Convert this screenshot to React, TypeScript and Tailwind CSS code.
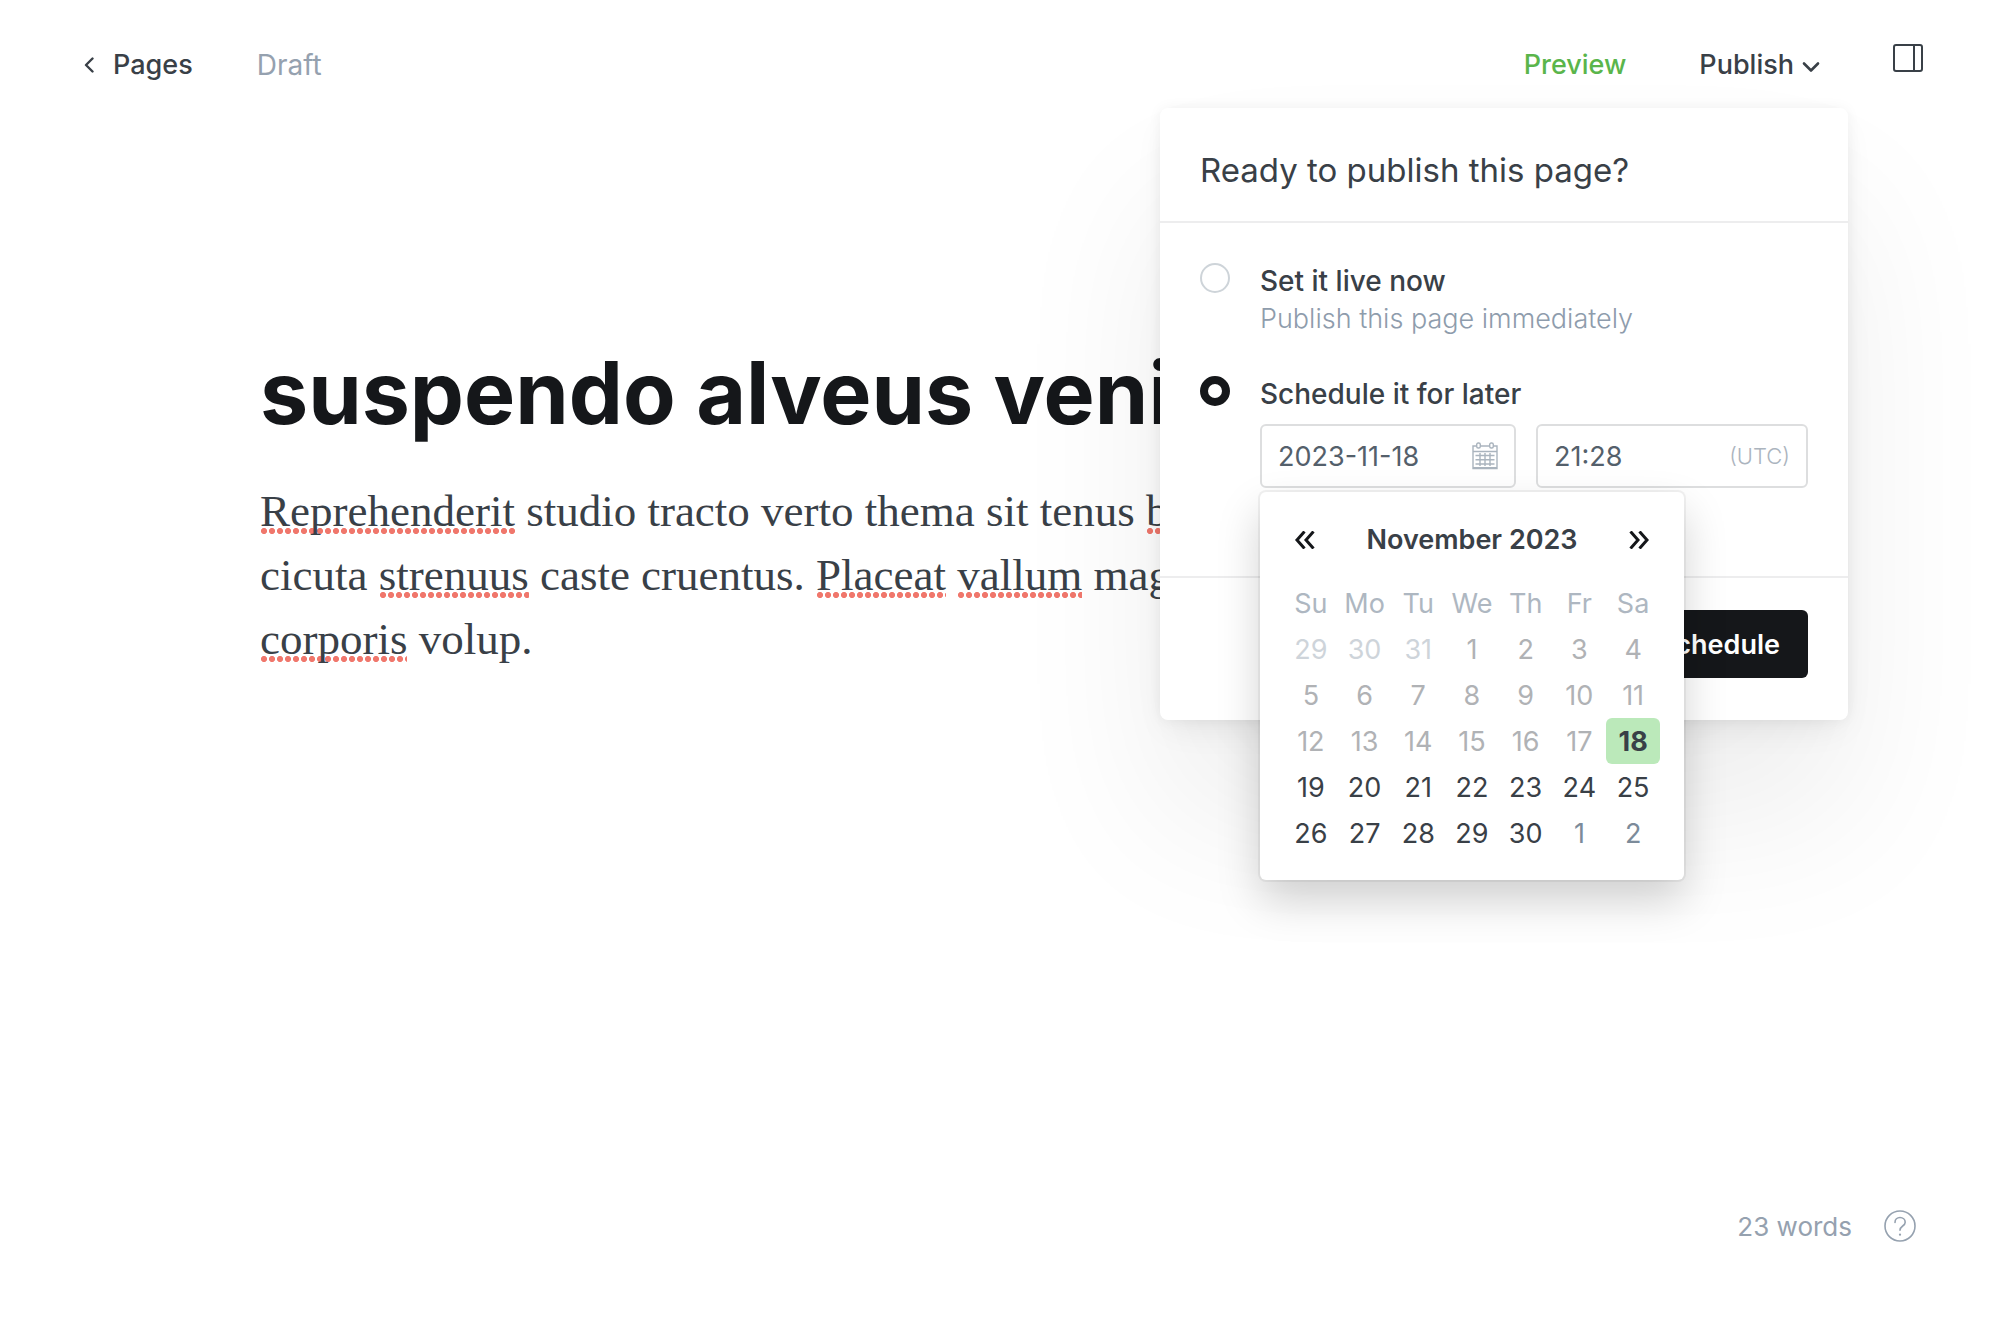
import { useState } from 'react';

const weekdays = ['Su', 'Mo', 'Tu', 'We', 'Th', 'Fr', 'Sa'];
const weeks = [
  [29, 30, 31, 1, 2, 3, 4],
  [5, 6, 7, 8, 9, 10, 11],
  [12, 13, 14, 15, 16, 17, 18],
  [19, 20, 21, 22, 23, 24, 25],
  [26, 27, 28, 29, 30, 1, 2],
];

function dayClass(week: number, day: number) {
  if (week === 0 && day > 7) return 'text-[#ced4da]';
  if (week === 4 && day < 7) return 'text-[#7c8b9a]';
  if (week === 2 && day === 18) return 'rounded-md bg-[#bbe9ba] font-bold text-[#394047]';
  if (week < 3) return 'text-[#b0b2b5]';
  return 'text-[#394047]';
}

function Misspelled({ children }: { children: string }) {
  return (
    <span className="bg-[radial-gradient(circle,#f0776c_2.7px,transparent_3.4px)] bg-[length:8px_6px] bg-[position:left_bottom_2px] bg-repeat-x">
      {children}
    </span>
  );
}

function CalendarIcon() {
  return (
    <svg width="26" height="28" viewBox="0 0 26 28" fill="none" stroke="#aab4be" strokeWidth="1.4" className="shrink-0" aria-hidden="true">
      <path d="M4.500 4H1v22.500h24V4h-3.500M8.500 4h9M1 9.500h24" />
      <path d="M1 26h24" strokeWidth="2" />
      <rect x="4.700" y="1" width="3.600" height="5" rx="1.500" />
      <rect x="17.700" y="1" width="3.600" height="5" rx="1.500" />
      <path d="M3.500 13.500h19M3.500 17.800h19M3.500 22h19M8 11v13M13 11v13M18 11v13" />
    </svg>
  );
}

function DoubleChevron({ flip }: { flip?: boolean }) {
  return (
    <svg width="22" height="18" viewBox="0 0 22 18" fill="none" stroke="#15171a" strokeWidth="3" className={flip ? 'rotate-180' : ''} aria-hidden="true">
      <path d="M10.500 0.500L3 9l7.500 8.500M19.500 0.500L12 9l7.500 8.500" />
    </svg>
  );
}

function Calendar() {
  return (
    <div className="absolute top-full left-0 mt-1 w-[424px] rounded-md bg-white p-6 shadow-[0_0_0_2px_rgba(0,0,0,0.05),0_20px_44px_rgba(0,0,0,0.18)]">
      <div className="flex h-12 items-center justify-between px-2.5">
        <button type="button" aria-label="Previous month">
          <DoubleChevron />
        </button>
        <span className="text-[27px] font-semibold text-[#394047]">November 2023</span>
        <button type="button" aria-label="Next month">
          <DoubleChevron flip />
        </button>
      </div>
      <table className="mt-4 w-full table-fixed border-collapse text-center text-[27px] leading-[44px]">
        <thead>
          <tr>
            {weekdays.map((d) => (
              <th key={d} scope="col" className="p-0 pt-0.5 font-normal text-[#aeb7c1]">
                {d}
              </th>
            ))}
          </tr>
        </thead>
        <tbody>
          {weeks.map((week, w) => (
            <tr key={w}>
              {week.map((day) => (
                <td key={day} className="p-0">
                  <button type="button" className={`block h-[46px] w-full pt-0.5 ${dayClass(w, day)}`}>
                    {day}
                  </button>
                </td>
              ))}
            </tr>
          ))}
        </tbody>
      </table>
    </div>
  );
}

const radioClass =
  'size-[30px] shrink-0 appearance-none rounded-full border-2 border-[#ced4d9] bg-white checked:border-8 checked:border-[#15171a]';

function PublishPanel() {
  const [mode, setMode] = useState('later');
  return (
    <section className="absolute top-[108px] right-[152px] z-10 w-[688px] rounded-lg bg-white shadow-[0_0_14px_rgba(0,0,0,0.05),0_14px_32px_-8px_rgba(0,0,0,0.08),0_100px_160px_rgba(0,0,0,0.07)]">
      <h2 className="border-b-2 border-[#ededee] px-10 pt-10 pb-[29px] text-[33px] leading-[44px] text-[#394047]">
        Ready to publish this page?
      </h2>
      <div className="px-10 pt-10 pb-[88px]">
        <div className="flex gap-[30px]">
          <input id="live" type="radio" name="mode" className={radioClass} checked={mode === 'live'} onChange={() => setMode('live')} />
          <label htmlFor="live" className="block">
            <span className="block text-[28px] leading-9 font-medium text-[#394047]">Set it live now</span>
            <span className="block text-[27px] leading-10 font-light text-[#8e9cac]">Publish this page immediately</span>
          </label>
        </div>
        <div className="mt-[37px] flex gap-[30px]">
          <input id="later" type="radio" name="mode" className={radioClass} checked={mode === 'later'} onChange={() => setMode('later')} />
          <div className="flex-1">
            <label htmlFor="later" className="block text-[28px] leading-9 font-medium text-[#394047]">
              Schedule it for later
            </label>
            <div className="relative mt-3 flex gap-5">
              <div className="flex h-16 w-64 items-center rounded-md border-2 border-[#dddedf] px-4">
                <input aria-label="Date" defaultValue="2023-11-18" className="w-full min-w-0 pt-0.5 text-[27px] text-[#54606b] outline-none" />
                <CalendarIcon />
              </div>
              <div className="flex h-16 flex-1 items-center rounded-md border-2 border-[#dddedf] px-4">
                <input id="time" aria-label="Time" defaultValue="21:28" className="w-full min-w-0 pt-0.5 text-[27px] text-[#54606b] outline-none" />
                <label htmlFor="time" className="text-[22px] font-light text-[#abb4be]">
                  (UTC)
                </label>
              </div>
              <Calendar />
            </div>
          </div>
        </div>
      </div>
      <div className="flex justify-end border-t-2 border-[#ededee] px-10 pt-8 pb-[42px]">
        <button type="button" className="h-[68px] rounded-md bg-[#15171a] px-7 pt-0.5 text-[27px] font-semibold text-white">
          Schedule
        </button>
      </div>
    </section>
  );
}

export default function App() {
  return (
    <div className="relative flex min-h-screen flex-col overflow-hidden bg-white font-['Inter',sans-serif]">
      <header className="flex h-32 items-center justify-between pt-0.5 pr-[77px] pl-[84px] text-[27px]">
        <div className="flex items-center gap-16">
          <a href="#pages" className="flex items-center gap-[19px] font-medium text-[#394047]">
            <svg width="10" height="16" viewBox="0 0 10 16" fill="none" stroke="currentColor" strokeWidth="2.4" strokeLinecap="round" strokeLinejoin="round" aria-hidden="true">
              <path d="M8.500 1.500L2 8l6.500 6.500" />
            </svg>
            Pages
          </a>
          <span className="text-[28px] text-[#95a1af]">Draft</span>
        </div>
        <div className="flex items-center gap-[73px] font-medium">
          <button type="button" className="text-[#5ab54b]">
            Preview
          </button>
          <button type="button" className="flex items-center gap-2 text-[#394047]">
            Publish
            <svg width="18" height="12" viewBox="0 0 18 12" fill="none" stroke="currentColor" strokeWidth="2.600" strokeLinecap="round" strokeLinejoin="round" className="mt-1" aria-hidden="true">
              <path d="M2 2.500l7 7 7-7" />
            </svg>
          </button>
          <button type="button" aria-label="Settings" className="mb-3.5">
            <svg width="30" height="28" viewBox="0 0 30 28" fill="none" stroke="#394047" strokeWidth="2" aria-hidden="true">
              <rect x="1" y="1" width="28" height="26" rx="2" />
              <path d="M21 1v26" />
            </svg>
          </button>
        </div>
      </header>

      <PublishPanel />

      <main className="flex-1 px-[260px] pt-[215px] whitespace-nowrap">
        <h1 className="text-[86px] leading-[100px] font-bold text-[#15171a]">suspendo alveus veni</h1>
        <p className="mt-9 font-['Liberation_Serif',serif] text-[45px] leading-[64px] text-[#394047]">
          <Misspelled>Reprehenderit</Misspelled> studio tracto verto thema sit tenus <Misspelled>b</Misspelled>
          <br />
          cicuta <Misspelled>strenuus</Misspelled> caste cruentus. <Misspelled>Placeat</Misspelled>{' '}
          <Misspelled>vallum</Misspelled> mag
          <br />
          <Misspelled>corporis</Misspelled> volup.
        </p>
      </main>

      <footer className="flex items-center justify-end gap-8 pr-[84px] pb-[74px] text-[26px] text-[#95a1af]">
        <span className="pt-0.5">23 words</span>
        <a href="#help" aria-label="Help">
          <svg width="32" height="32" viewBox="0 0 32 32" fill="none" stroke="currentColor" strokeWidth="1.600" strokeLinecap="round" aria-hidden="true">
            <circle cx="16" cy="16" r="15" />
            <path d="M11 12.500c0-3 2.200-5 5-5s5.200 2 5.200 4.700c0 4-5.200 3.600-5.200 8" />
            <path d="M16 24.500v.2" strokeWidth="2.200" />
          </svg>
        </a>
      </footer>
    </div>
  );
}
